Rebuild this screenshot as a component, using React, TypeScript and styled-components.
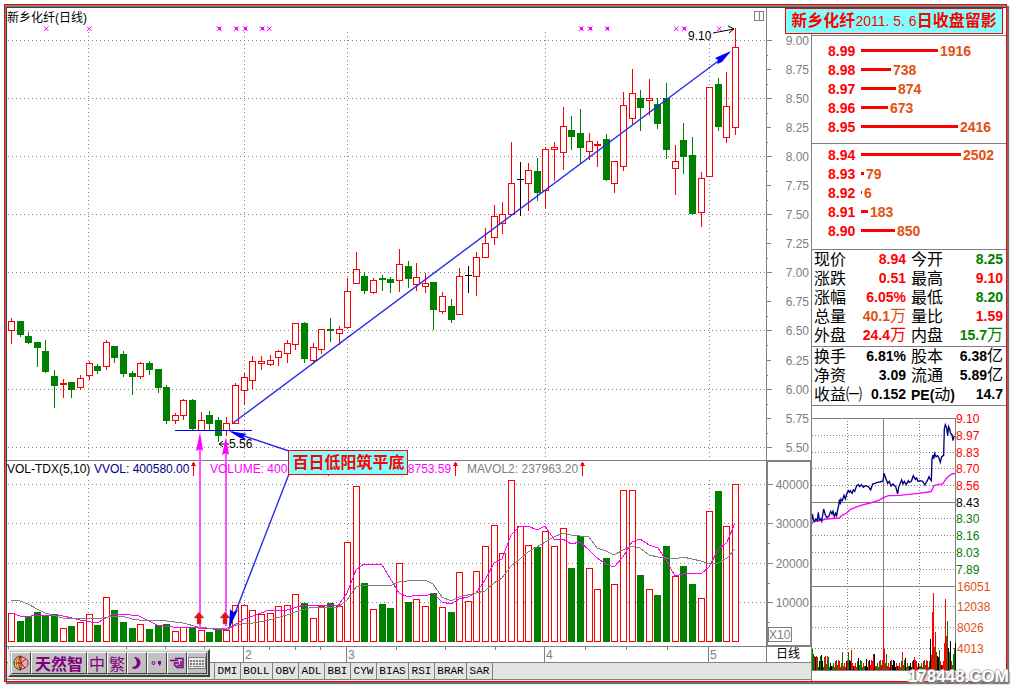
import React from "react";
import styled, { createGlobalStyle } from "styled-components";

const RED = "#ff0000";
const GREEN = "#008000";
const GRAY = "#808080";
const NAVY = "#000080";
const ORANGE = "#e45010";
const MAGENTA = "#ff00ff";
const BLUE = "#0000ff";
const PURPLE = "#800080";
const CYAN = "#80ffff";
const SANS = '"Liberation Sans", "Noto Sans CJK SC", sans-serif';

const GlobalStyle = createGlobalStyle`
  * { box-sizing: border-box; }
  body { margin: 0; background: #fff; font-family: ${SANS}; font-size: 12px; color: #000; }
`;

const Page = styled.div`
  position: relative;
  padding: 4px 5px 5px 4px;
`;

const Frame = styled.main`
  border: 1px solid ${RED};
  box-shadow: 2px 2px 1px #707070;
  background: #fff;
`;

const Bezel = styled.div`
  border-top: 2px solid ${GRAY};
  border-left: 1px solid ${GRAY};
`;

const Body = styled.div`
  position: relative;
  display: grid;
  grid-template-columns: minmax(0, 1fr) 195px;
  border-top: 1px solid #404040;
  border-left: 1px solid #404040;
`;

const ChartColumn = styled.section`
  position: relative;
  min-width: 0;
`;

const Stage = styled.div`
  position: relative;
`;

const Drawing = styled.svg`
  display: block;
  width: 100%;
  height: auto;
  font-family: ${SANS};
  font-size: 12px;
`;

const ChartTitle = styled.h1`
  position: absolute;
  top: 1px;
  left: 0;
  margin: 0;
  font-size: 12px;
  line-height: 18px;
  font-weight: 400;
`;

const Readouts = styled.div`
  position: absolute;
  top: 69.4%;
  left: 0;
  display: flex;
  line-height: 14px;
  white-space: nowrap;
`;

const Readout = styled.span<{ $color: string; $width: number }>`
  display: flex;
  gap: 1px;
  width: ${(p) => p.$width}px;
  color: ${(p) => p.$color};
`;

const Callout = styled.div`
  position: absolute;
  top: 67.6%;
  left: 35%;
  padding: 0 3px;
  border: 1px solid ${RED};
  background: ${CYAN};
  color: ${RED};
  font-size: 16px;
  font-weight: 700;
  line-height: 23px;
  white-space: nowrap;
`;

const TabBar = styled.nav`
  display: flex;
  height: 18px;
  margin-bottom: 1px;
  border: solid ${GRAY};
  border-width: 1px 0;
  background: #e4e4e4;
`;

const TabSpacer = styled.div`
  width: 208px;
  padding-right: 4px;
  border-right: 1px solid ${GRAY};
  text-align: right;
  line-height: 17px;
`;

const Tab = styled.button<{ $letters: number }>`
  width: ${(p) => p.$letters * 6 + 8}px;
  padding: 0;
  border: 0;
  border-right: 1px solid ${GRAY};
  background: transparent;
  color: #000;
  font-family: "Liberation Mono", monospace;
  font-size: 11px;
  line-height: 16px;
`;

const Toolbar = styled.div`
  position: absolute;
  left: 1px;
  bottom: 4px;
  display: flex;
  padding: 1px;
  border: 2px solid;
  border-color: #e8e8e8 #404040 #404040 #e8e8e8;
  background: #c0c0c0;
`;

const ToolButton = styled.button<{ $width?: number }>`
  display: flex;
  align-items: center;
  justify-content: center;
  width: ${(p) => p.$width ?? 20}px;
  height: 22px;
  padding: 0;
  border: 1px solid;
  border-color: #fff #404040 #404040 #fff;
  background: #c0c0c0;
  color: ${PURPLE};
  font-family: "Noto Sans CJK SC", sans-serif;
  font-size: 16px;
  line-height: 20px;
`;

const Side = styled.aside`
  border-left: 1px solid ${GRAY};
`;

const SideHead = styled.div`
  height: 28px;
  border-bottom: 1px solid ${GRAY};
`;

const Banner = styled.h2`
  position: absolute;
  top: 0;
  right: 3px;
  width: 218px;
  margin: 0;
  border: 1px solid ${RED};
  background: ${CYAN};
  color: ${RED};
  font-size: 16px;
  font-weight: 700;
  line-height: 24px;
  text-align: center;
  white-space: nowrap;
`;

const BannerDate = styled.span`
  font-size: 14px;
  font-weight: 400;
`;

const Book = styled.ul<{ $top: number; $bottom: number }>`
  margin: 0;
  padding: ${(p) => p.$top}px 0 ${(p) => p.$bottom}px 16px;
  border-bottom: 1px solid ${GRAY};
  list-style: none;
`;

const BookRow = styled.li`
  display: flex;
  align-items: center;
  gap: 2px;
  height: 19px;
  font-size: 14px;
  font-weight: 700;
`;

const BookPrice = styled.span`
  width: 31px;
  color: ${RED};
`;

const BookBar = styled.span`
  height: 3px;
  background: ${RED};
`;

const BookSize = styled.span`
  color: ${ORANGE};
`;

const Quotes = styled.table`
  width: 100%;
  padding: 0 3px 1px 2px;
  border-bottom: 1px solid ${GRAY};
  border-spacing: 0;
  table-layout: fixed;
`;

const Label = styled.th`
  height: 19px;
  padding: 0;
  font-size: 16px;
  font-weight: 400;
  line-height: 19px;
  text-align: left;
  white-space: nowrap;

  td + & {
    padding-left: 5px;
  }
`;

const Value = styled.td<{ $color: string }>`
  height: 19px;
  padding: 0;
  color: ${(p) => p.$color};
  font-size: 14px;
  font-weight: 700;
  line-height: 19px;
  text-align: right;
  white-space: nowrap;
`;

const Unit = styled.span`
  font-size: 16px;
  font-weight: 400;
  line-height: 0;
`;

const Latin = styled.span`
  font-size: 14px;
  font-weight: 700;
  line-height: 0;
`;

const Watermark = styled.div`
  position: absolute;
  right: 3px;
  bottom: 0;
  color: #fff;
  font-size: 17px;
  font-weight: 700;
  line-height: 20px;
  text-shadow: 1px 1px 0 #777, 2px 2px 1px #999, -1px 0 0 #bbb, 0 -1px 0 #bbb;
`;

type Candle = [kind: "R" | "G" | "K", high: number, top: number, bottom: number, low: number, volume: number];

const candles: Candle[] = [
  ["R", 318, 321, 330, 343, 613], ["G", 321, 321, 335, 336, 621], ["G", 332, 336, 343, 343, 616],
  ["G", 342, 342, 348, 366, 612], ["G", 340, 351, 372, 372, 615], ["G", 370, 376, 386, 407, 614],
  ["R", 379, 383, 384, 397, 628], ["G", 382, 382, 390, 397, 626], ["R", 375, 378, 387, 389, 622],
  ["R", 361, 363, 375, 379, 614], ["G", 364, 366, 371, 373, 625], ["R", 340, 342, 366, 369, 597],
  ["G", 346, 346, 358, 362, 610], ["G", 351, 354, 374, 376, 622], ["G", 371, 373, 377, 394, 628],
  ["R", 362, 363, 376, 378, 624], ["G", 361, 363, 370, 374, 629], ["G", 369, 369, 388, 392, 625],
  ["G", 385, 387, 421, 423, 624], ["R", 413, 415, 420, 423, 631], ["R", 399, 400, 415, 419, 627],
  ["G", 399, 400, 429, 429, 627], ["R", 412, 420, 430, 430, 630], ["G", 411, 415, 424, 429, 632],
  ["G", 417, 420, 436, 441, 630], ["R", 417, 423, 430, 435, 630], ["R", 383, 385, 423, 423, 605],
  ["R", 373, 377, 390, 404, 605], ["R", 356, 361, 380, 388, 610], ["R", 356, 361, 363, 369, 614],
  ["R", 355, 360, 364, 365, 613], ["R", 350, 351, 357, 365, 606], ["R", 340, 343, 353, 362, 605],
  ["R", 323, 323, 344, 349, 594], ["G", 322, 323, 359, 362, 603], ["R", 343, 347, 360, 363, 618],
  ["R", 329, 329, 349, 353, 606], ["G", 318, 329, 331, 341, 603], ["R", 326, 329, 333, 344, 606],
  ["R", 278, 291, 327, 328, 542], ["R", 252, 269, 283, 283, 486], ["G", 272, 276, 291, 293, 583],
  ["R", 278, 280, 292, 293, 609], ["G", 275, 278, 280, 290, 604], ["G", 277, 279, 283, 292, 608],
  ["R", 249, 264, 280, 291, 563], ["G", 261, 266, 279, 287, 602], ["R", 263, 277, 284, 290, 599],
  ["R", 273, 283, 286, 292, 606], ["G", 282, 282, 310, 329, 593], ["R", 292, 296, 311, 313, 607],
  ["G", 299, 306, 320, 322, 612], ["R", 268, 276, 314, 314, 572], ["K", 266, 275, 276, 292, 601],
  ["R", 252, 257, 276, 295, 571], ["R", 228, 243, 257, 257, 546], ["R", 205, 216, 237, 244, 525],
  ["R", 202, 214, 223, 233, 553], ["R", 142, 183, 214, 214, 480], ["K", 162, 179, 180, 215, 526],
  ["R", 163, 170, 183, 210, 545], ["G", 158, 171, 193, 200, 547], ["R", 147, 149, 190, 208, 531],
  ["R", 142, 147, 149, 180, 546], ["R", 107, 126, 152, 169, 528], ["G", 116, 130, 137, 149, 568],
  ["G", 109, 133, 148, 163, 536], ["R", 133, 141, 151, 159, 568], ["R", 141, 144, 145, 166, 589],
  ["G", 134, 139, 180, 180, 558], ["R", 161, 161, 183, 192, 584], ["R", 92, 105, 166, 170, 490],
  ["R", 69, 93, 118, 124, 490], ["G", 90, 98, 108, 130, 575], ["R", 79, 98, 100, 115, 589],
  ["G", 98, 104, 124, 128, 595], ["G", 83, 98, 150, 158, 546], ["R", 145, 161, 168, 194, 576],
  ["G", 123, 140, 157, 173, 566], ["G", 137, 155, 214, 214, 584], ["R", 172, 178, 212, 226, 598],
  ["R", 87, 87, 176, 176, 511], ["G", 78, 84, 127, 130, 491], ["R", 72, 106, 137, 142, 526],
  ["R", 28, 47, 127, 134, 484],
];

const VOLUME_BASE = 642;

const maShort =
  "11,613 20,616 28,617 35,615 63,616 72,618 80,620 97,623 113,614 122,614 139,616 157,625 173,627 198,628 227,630 233,626 244,619 253,616 269,610 287,610 304,605 338,606 347,593 356,570 364,564 382,565 390,578 399,593 408,597 416,595 425,596 433,593 442,602 451,604 459,599 468,597 476,593 485,580 494,563 502,559 511,535 520,526 528,526 537,530 545,526 554,539 563,539 571,544 580,542 589,550 597,558 606,564 614,567 623,557 632,542 640,539 649,545 658,548 666,560 675,576 683,574 692,573 701,574 709,567 718,550 727,542 735,523";
const maLong =
  "11,600 20,601 28,604 37,609 45,613 63,618 80,618 97,619 113,616 122,616 132,619 139,620 167,621 183,623 198,627 207,628 227,628 244,623 253,623 269,620 287,615 295,612 313,607 338,607 347,600 356,587 364,585 382,585 390,586 399,582 416,580 425,580 433,584 442,597 451,601 459,597 476,593 485,591 494,583 502,578 511,566 520,559 528,552 537,547 545,542 554,537 563,533 571,535 589,537 597,548 606,551 614,555 623,550 632,546 640,548 649,555 658,557 675,559 683,557 692,559 701,561 709,564 718,563 727,558 735,549";

const priceLevels = [
  ["9.00", 40], ["8.75", 69], ["8.50", 98], ["8.25", 127], ["8.00", 156], ["7.75", 185], ["7.50", 214], ["7.25", 243],
  ["7.00", 272], ["6.75", 301], ["6.50", 330], ["6.25", 360], ["6.00", 389], ["5.75", 418], ["5.50", 447],
] as const;
const volumeLevels = [["40000", 484], ["30000", 523], ["20000", 563], ["10000", 602]] as const;
const months = [["", 88], ["2", 244], ["3", 347], ["4", 545], ["5", 709]] as const;
const weekTicks = [126, 165, 204, 269, 295, 320, 396, 445, 495, 585, 626, 667];
const eventMarks: [number, boolean][] = [
  [46, false], [89, false], [219, true], [236, true], [245, true], [262, true], [269, false],
  [581, true], [590, true], [607, true], [676, false], [684, true], [719, false],
];

function CandleShape({ candle, index }: { candle: Candle; index: number }) {
  const [kind, high, top, bottom, low, volume] = candle;
  const x = Math.floor(11.5 + 8.62 * index);
  const color = kind === "G" ? GREEN : kind === "K" ? "#000" : RED;
  const flat = kind === "K" || bottom - top <= 1;
  const hollow = kind !== "G";
  return (
    <g fill={color}>
      <rect x={x} y={high} width={1} height={low - high + 1} />
      {flat || !hollow ? (
        <rect x={x - 3} y={top} width={7} height={kind === "K" ? 1 : Math.max(bottom - top, 2)} />
      ) : (
        <rect x={x - 2.5} y={top + 0.5} width={6} height={bottom - top} fill="#fff" stroke={color} />
      )}
      {kind === "G" ? (
        <rect x={x - 3} y={volume} width={7} height={VOLUME_BASE - volume} />
      ) : (
        <rect x={x - 2.5} y={volume + 0.5} width={6} height={VOLUME_BASE - volume - 1} fill="#fff" stroke={RED} />
      )}
    </g>
  );
}

function MainChart() {
  return (
    <Drawing viewBox="7 8 804 654" role="img" aria-label="日线">
      <g shapeRendering="crispEdges">
        <g stroke={GRAY} strokeDasharray="1 3">
          {priceLevels.filter((_, i) => i % 2 === 0).map(([l, y]) => (
            <line key={l} x1={8} x2={766} y1={y + 0.5} y2={y + 0.5} />
          ))}
          {volumeLevels.map(([l, y]) => (
            <line key={l} x1={8} x2={766} y1={y + 0.5} y2={y + 0.5} />
          ))}
          {months.map(([l, x]) => (
            <path key={x} d={`M${x + 0.5} 32V460M${x + 0.5} 480V642`} />
          ))}
        </g>
        <g stroke={GRAY} fill="none">
          <path d="M7 460.5H811M7 646.5H811M766.5 8V662M8.5 646V662" />
          <rect x={767} y={461} width={44} height={185} strokeWidth={2} />
          <path d="M754.5 11.5H763.5V20.5H754.5ZM759.5 11V20" />
          {priceLevels.map(([l, y], i) => (
            <path key={l} d={`M767 ${y + 0.5}h${i % 2 ? 4 : 5}M767 ${y + 15}h1`} />
          ))}
          {volumeLevels.map(([l, y]) => (
            <path key={l} d={`M768 ${y + 0.5}h5M768 ${y + 20.5}h2`} />
          ))}
          {months.slice(1).map(([l, x]) => (
            <path key={l} d={`M${x - 0.5} 646V662`} />
          ))}
          {weekTicks.map((x) => (
            <path key={x} d={`M${x + 0.5} 646v4`} />
          ))}
          <rect x={768.5} y={627.5} width={23} height={14} />
        </g>
        {candles.map((c, i) => (
          <CandleShape key={i} candle={c} index={i} />
        ))}
        <polyline points={maShort} fill="none" stroke={MAGENTA} />
        <polyline points={maLong} fill="none" stroke={GRAY} />
      </g>
      {eventMarks.map(([x, big]) => (
        <g key={x} stroke={MAGENTA} fill={MAGENTA}>
          <path d={`M${x - 2} 26.500l4.500 4.500M${x + 2.5} 26.500l-4.500 4.500`} />
          {big && <rect x={x - 1} y={27} width={3} height={3} stroke="none" />}
        </g>
      ))}

      <g fill={GRAY}>
        {priceLevels.map(([l, y]) => (
          <text key={l} x={809} y={y + 5} textAnchor="end">{l}</text>
        ))}
        {volumeLevels.map(([l, y]) => (
          <text key={l} x={809} y={y + 5} textAnchor="end">{l}</text>
        ))}
        {months.map(([l, x]) => (
          <text key={x} x={x + 1} y={659}>{l}</text>
        ))}
        <text x={769} y={639}>X10</text>
      </g>
      <text x={776} y={658}>日线</text>

      <text x={229} y={448}>5.56</text>
      <path d="M229 444H219M223 441L219 444L223 447" fill="none" stroke="#000" />
      <text x={688} y={40}>9.10</text>
      <path d="M713 33L734 29M728 26L734 29L729 33" fill="none" stroke="#000" />

      <g stroke="#ff50ff" strokeWidth={2}>
        <path d="M200 628V446M226 626V450" />
      </g>
      <path d="M200 432L203 451L200 449L196 451ZM226 437L229 455L226 453L222 455Z" fill={MAGENTA} />
      {[199, 225].map((x) => (
        <path key={x} d={`M${x} 612l5 6h-3v6h-4v-6h-3z`} fill="#e81018" stroke="#a06060" strokeWidth={0.5} />
      ))}
      <g stroke="#2a2af0" strokeWidth={1.4} fill="none">
        <path d="M233 423L729 53M289 451L232 432M289 474L230 626" />
      </g>
      <path d="M175 430.5H252" stroke={BLUE} />
      <g fill={BLUE}>
        <path d="M731 51L715 58L718 60L717 64L722 62Z" />
        <path d="M229 431L247 434L243 436L246 440L240 438Z" />
        <path d="M229 628L230 609L233 612L238 610L234 618Z" />
      </g>
    </Drawing>
  );
}

function RiseArrow() {
  return (
    <svg width="7" height="14" viewBox="0 0 7 14" shapeRendering="crispEdges" aria-hidden="true">
      <path d="M3 0h1v1h1v2h1v1H1V3h1V1h1zM3 3h1v11H3z" fill={RED} />
    </svg>
  );
}

const intradayPrice =
  "35,350 37,330 40,345 43,352 48,345 52,350 55,325 58,348 62,345 65,352 71,315 75,330 80,340 86,338 92,322 96,330 99,322 103,338 107,328 110,335 113,318 116,305 118,290 121,297 123,285 127,290 132,274 136,285 140,270 145,260 148,265 151,260 156,268 160,258 164,262 170,245 175,242 179,248 184,242 190,250 195,245 205,248 212,258 218,240 225,238 232,235 240,234 249,231 252,208 257,222 263,238 268,232 273,246 279,240 287,248 293,270 296,250 300,240 305,228 309,240 313,232 319,242 325,230 328,235 334,232 340,215 346,226 350,222 354,232 361,230 368,232 375,243 379,235 382,230 387,218 390,225 394,230 396,165 399,153 401,165 404,148 408,158 413,155 417,162 421,175 425,158 431,154 433,75 436,62 440,72 443,95 446,68 449,75 452,88 456,92 459,110 461,100 464,97";
const intradayAverage =
  "35,360 40,353 60,350 80,345 118,342 125,335 140,327 152,316 180,305 210,297 235,290 252,280 265,275 300,274 325,271 355,268 385,264 394,262 402,245 415,241 428,240 438,225 446,217 456,210 466,208";

const priceScale = [
  ["9.10", 419, RED], ["8.97", 436, RED], ["8.83", 453, RED], ["8.70", 469, RED], ["8.56", 486, RED], ["8.43", 503, "#000"],
  ["8.30", 519, GREEN], ["8.16", 536, GREEN], ["8.03", 553, GREEN], ["7.89", 570, GREEN],
] as const;
const volumeScale = [["16051", 587], ["12038", 607], ["8026", 628], ["4013", 649]] as const;

const tickSpikes: Record<number, [number, string]> = {
  0: [21, GREEN], 1: [16, GREEN], 3: [13, "#000"], 8: [14, GREEN], 9: [15, "#000"], 30: [18, GREEN], 36: [18, GREEN],
  39: [20, RED], 46: [12, "#000"], 54: [11, "#000"], 61: [16, RED], 62: [16, "#000"], 71: [63, RED], 72: [21, RED],
  74: [16, GREEN], 90: [18, RED], 93: [12, "#000"], 102: [13, RED], 114: [10, RED], 118: [31, "#000"], 119: [15, RED],
  120: [58, RED], 121: [77, RED], 122: [23, GREEN], 123: [38, RED], 124: [18, RED], 127: [20, GREEN], 132: [27, RED],
  133: [71, RED], 134: [34, RED], 135: [49, GREEN], 136: [22, "#000"], 137: [18, GREEN], 138: [29, "#000"],
  141: [16, GREEN], 142: [22, GREEN], 143: [27, "#000"],
};

const tickBars = Array.from({ length: 144 }, (_, i): [number, string] => {
  if (tickSpikes[i]) return tickSpikes[i];
  const noise = (i * i * 7 + i * 13) % 11;
  const color = i < 20 ? [GREEN, RED, "#000"][noise % 3] : [RED, RED, GREEN, "#000"][(noise + i) % 4];
  return [3 + noise * (i > 115 || i < 18 ? 1.1 : 0.7), color];
});

function IntradayChart() {
  return (
    <Drawing viewBox="812 407 194 274" role="img" aria-label="分时">
      <g shapeRendering="crispEdges" stroke={GRAY} fill="none">
        <path d="M812 419.5H956M955.5 419V671M883.5 419V671M812 503.5H956M812 587.5H956M812 671.5H956" />
        <g strokeDasharray="1 2">
          {[436, 453, 469, 486, 519, 536, 553, 570, 607, 628, 649].map((y) => (
            <path key={y} d={`M812 ${y + 0.5}H956`} />
          ))}
          <path d="M847.5 419V671M919.5 419V671" />
        </g>
      </g>
      <g shapeRendering="crispEdges">
        {tickBars.map(([h, color], i) => (
          <rect key={i} x={812 + i} y={671 - Math.round(h)} width={1} height={Math.round(h)} fill={color} />
        ))}
      </g>
      <g transform="translate(800 405) scale(0.3333)" fill="none" strokeWidth={4}>
        <polyline points={intradayAverage} stroke={MAGENTA} />
        <polyline points={intradayPrice} stroke={NAVY} />
      </g>
      {priceScale.map(([l, y, color]) => (
        <text key={l} x={956} y={y + 5} fill={color}>{l}</text>
      ))}
      {volumeScale.map(([l, y]) => (
        <text key={l} x={957} y={y + 5} fill={ORANGE}>{l}</text>
      ))}
    </Drawing>
  );
}

const asks: [string, number][] = [["8.99", 1916], ["8.98", 738], ["8.97", 874], ["8.96", 673], ["8.95", 2416]];
const bids: [string, number][] = [["8.94", 2502], ["8.93", 79], ["8.92", 6], ["8.91", 183], ["8.90", 850]];

function OrderBook({ rows, top, bottom }: { rows: [string, number][]; top: number; bottom: number }) {
  return (
    <Book $top={top} $bottom={bottom}>
      {rows.map(([price, size]) => (
        <BookRow key={price}>
          <BookPrice>{price}</BookPrice>
          <BookBar style={{ width: Math.max(1, Math.round(size / 25)) }} />
          <BookSize>{size}</BookSize>
        </BookRow>
      ))}
    </Book>
  );
}

type Cell = [label: React.ReactNode, value: string, color: string, unit?: string];

const session: [Cell, Cell][] = [
  [["现价", "8.94", RED], ["今开", "8.25", GREEN]],
  [["涨跌", "0.51", RED], ["最高", "9.10", RED]],
  [["涨幅", "6.05%", RED], ["最低", "8.20", GREEN]],
  [["总量", "40.1", ORANGE, "万"], ["量比", "1.59", RED]],
  [["外盘", "24.4", RED, "万"], ["内盘", "15.7", GREEN, "万"]],
];
const fundamentals: [Cell, Cell][] = [
  [["换手", "6.81%", "#000"], ["股本", "6.38", "#000", "亿"]],
  [["净资", "3.09", "#000"], ["流通", "5.89", "#000", "亿"]],
  [["收益㈠", "0.152", "#000"], [<><Latin>PE(</Latin>动<Latin>)</Latin></>, "14.7", "#000"]],
];

function QuoteTable({ rows }: { rows: [Cell, Cell][] }) {
  return (
    <Quotes>
      <colgroup>
        <col width="48" />
        <col width="44" />
        <col width="47" />
        <col />
      </colgroup>
      <tbody>
        {rows.map((pair, i) => (
          <tr key={i}>
            {pair.map(([label, value, color, unit], j) => (
              <React.Fragment key={j}>
                <Label scope="row">{label}</Label>
                <Value $color={color}>
                  {value}
                  {unit && <Unit>{unit}</Unit>}
                </Value>
              </React.Fragment>
            ))}
          </tr>
        ))}
      </tbody>
    </Quotes>
  );
}

const indicators = ["DMI", "BOLL", "OBV", "ADL", "BBI", "CYW", "BIAS", "RSI", "BRAR", "SAR"];

function InputToolbar() {
  return (
    <Toolbar role="toolbar" aria-label="天然智">
      <ToolButton aria-label="Logo">
        <svg width="16" height="16" viewBox="0 0 16 16">
          <path d="M8 1A7 7 0 0 0 8 15C5 11 5 5 8 1Z" fill="#ffe860" stroke="#303030" />
          <circle cx="9" cy="8" r="6" fill="none" stroke="#e02000" />
          <path d="M8 1V15M3 8H8L13 4M8 8L12 13" fill="none" stroke="#d00000" />
        </svg>
      </ToolButton>
      <ToolButton $width={56}><b>天然智</b></ToolButton>
      <ToolButton>中</ToolButton>
      <ToolButton>繁</ToolButton>
      <ToolButton aria-label="Half width">
        <svg width="14" height="14" viewBox="0 0 14 14"><path d="M4 1C12 1 13 11 5 13C3 13 2 12 2 11C8 11 8 5 4 1Z" fill={PURPLE} /></svg>
      </ToolButton>
      <ToolButton aria-label="Punctuation">
        <svg width="14" height="14" viewBox="0 0 14 14">
          <circle cx="3.500" cy="7" r="1.500" fill="none" stroke={PURPLE} />
          <path d="M8 5h3v3l-2 2v-2h-1z" fill={PURPLE} />
        </svg>
      </ToolButton>
      <ToolButton aria-label="Hand">
        <svg width="16" height="14" viewBox="0 0 16 14">
          <path d="M1 4.500H9M6 2.500H14V11.500H8L5.500 9V7H10M8 9.500H12V5" fill="none" stroke={PURPLE} strokeWidth="1.500" />
        </svg>
      </ToolButton>
      <ToolButton aria-label="Keyboard">
        <svg width="18" height="12" viewBox="0 0 18 12" shapeRendering="crispEdges">
          <rect x="0.500" y="0.500" width="17" height="11" fill="#e8e8e8" stroke={GRAY} />
          <path d="M2 3.500H16M2 6.500H16" stroke={GRAY} strokeWidth="2" strokeDasharray="2 1" />
          <path d="M2 9.500h2M5 9.500h8M14 9.500h2" stroke={GRAY} />
        </svg>
      </ToolButton>
    </Toolbar>
  );
}

export default function App() {
  return (
    <Page>
      <GlobalStyle />
      <Frame>
        <Bezel>
          <Body>
            <ChartColumn>
              <Stage>
                <MainChart />
                <ChartTitle>新乡化纤(日线)</ChartTitle>
                <Readouts>
                  <Readout $color="#000" $width={87}>VOL-TDX(5,10)</Readout>
                  <Readout $color={NAVY} $width={116}>VVOL: 400580.00<RiseArrow /></Readout>
                  <Readout $color={MAGENTA} $width={130}>VOLUME: 400580.00<RiseArrow /></Readout>
                  <Readout $color={MAGENTA} $width={127}>MAVOL1: 298753.59<RiseArrow /></Readout>
                  <Readout $color={GRAY} $width={126}>MAVOL2: 237963.20<RiseArrow /></Readout>
                </Readouts>
                <Callout>百日低阳筑平底</Callout>
              </Stage>
              <TabBar>
                <TabSpacer>.</TabSpacer>
                {indicators.map((name) => (
                  <Tab key={name} $letters={name.length}>{name}</Tab>
                ))}
              </TabBar>
              <InputToolbar />
            </ChartColumn>
            <Side>
              <SideHead />
              <OrderBook rows={asks} top={5} bottom={7} />
              <OrderBook rows={bids} top={1} bottom={9} />
              <QuoteTable rows={session} />
              <QuoteTable rows={fundamentals} />
              <IntradayChart />
            </Side>
            <Banner>
              新乡化纤<BannerDate>2011. 5. 6</BannerDate>日收盘留影
            </Banner>
          </Body>
        </Bezel>
      </Frame>
      <Watermark>178448.COM</Watermark>
    </Page>
  );
}
